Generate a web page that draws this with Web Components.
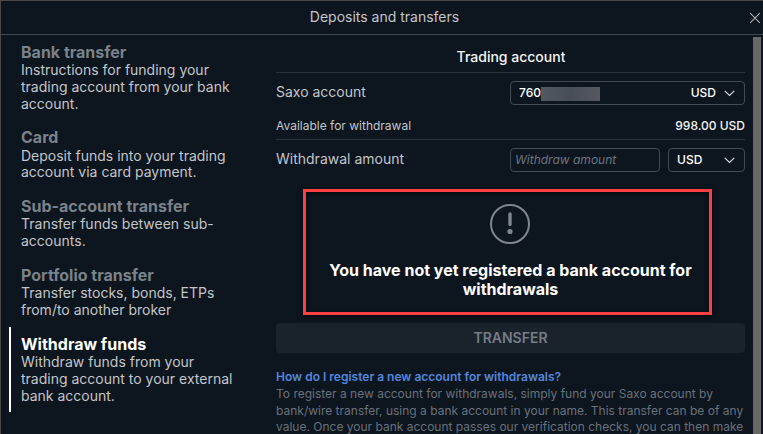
<!DOCTYPE html>
<html lang="en">
<head>
<meta charset="utf-8">
<title>Deposits and transfers</title>
<style>
  html, body {
    margin: 0;
    height: 100%;
    overflow: hidden;
    background: #0d151e;
  }
  body {
    font-family: Inter, 'Liberation Sans', sans-serif;
    font-size: 14px;
    line-height: 1.2;
    color: #c3c6ca;
  }
</style>
</head>
<body>
<transfer-dialog heading="Deposits and transfers">
  <menu-item slot="menu" label="Bank transfer">Instructions for funding your trading account from your bank account.</menu-item>
  <menu-item slot="menu" label="Card">Deposit funds into your trading account via card payment.</menu-item>
  <menu-item slot="menu" label="Sub-account transfer">Transfer funds between sub-accounts.</menu-item>
  <menu-item slot="menu" label="Portfolio transfer">Transfer stocks, bonds, ETPs from/to another broker</menu-item>
  <menu-item slot="menu" label="Withdraw funds" active>Withdraw funds from your trading account to your external bank account.</menu-item>
  <withdraw-form></withdraw-form>
</transfer-dialog>

<script>
class TransferDialog extends HTMLElement {
  constructor() {
    super();
    this.attachShadow({ mode: 'open' });
  }

  connectedCallback() {
    this.shadowRoot.innerHTML = `
      <style>
        :host {
          display: flex;
          flex-direction: column;
          box-sizing: border-box;
          height: 434px;
          border-top: 1px solid #474747;
          border-left: 1px solid #474747;
          overflow: hidden;
        }
        header {
          display: flex;
          align-items: center;
          flex: none;
          height: 33px;
          padding: 0 2px 0 10px;
          border-bottom: 1px solid #41474f;
        }
        h1 {
          flex: 1;
          margin: 0;
          padding-left: 9px;
          font-size: 14px;
          font-weight: 400;
          text-align: center;
        }
        .body {
          display: flex;
          flex: 1;
          min-height: 0;
        }
        nav {
          flex: none;
          width: 243px;
          margin-top: -.2px;
          padding-left: 8px;
        }
        main {
          flex: none;
          width: 469px;
          margin-left: 24px;
        }
        .scrollbar {
          flex: none;
          width: 8px;
          margin: 2px 0 0 8px;
          background: #686868;
        }
      </style>
      <header>
        <h1>${this.getAttribute('heading')}</h1>
        <svg width="12" height="12" viewBox="0 0 12 12" fill="none" stroke="#b0b2b5" stroke-width="1.1">
          <path d="M1.2 1.2l9.6 9.6M10.8 1.2l-9.6 9.6"/>
        </svg>
      </header>
      <div class="body">
        <nav><slot name="menu"></slot></nav>
        <main><slot></slot></main>
        <div class="scrollbar"></div>
      </div>
    `;
  }
}

class MenuItem extends HTMLElement {
  constructor() {
    super();
    this.attachShadow({ mode: 'open' });
  }

  connectedCallback() {
    this.shadowRoot.innerHTML = `
      <style>
        :host {
          display: block;
          width: 215px;
          padding: 8px 0 8px 10px;
          border-left: 2px solid transparent;
        }
        h2 {
          margin: 0;
          font-size: 16px;
          font-weight: 700;
          line-height: 19.2px;
          color: #7a828b;
        }
        p {
          margin: 0;
          line-height: 16.8px;
        }
        :host([active]) {
          border-color: #fff;
        }
        :host([active]) h2 {
          color: #fff;
        }
      </style>
      <h2>${this.getAttribute('label')}</h2>
      <p><slot></slot></p>
    `;
  }
}

class SelectBox extends HTMLElement {
  constructor() {
    super();
    this.attachShadow({ mode: 'open' });
  }

  connectedCallback() {
    this.shadowRoot.innerHTML = `
      <style>
        :host {
          display: flex;
          align-items: center;
          box-sizing: border-box;
          height: 24px;
          padding: 0 9px 0 8px;
          border: 1px solid #434a53;
          border-radius: 4px;
          font-size: 12px;
          font-weight: 500;
          color: #fff;
        }
        svg {
          margin-left: 8px;
        }
        .value {
          display: flex;
          align-items: center;
          flex: 1;
        }
      </style>
      <span class="value"><slot></slot></span>
      <span><slot name="currency"></slot></span>
      <svg width="11" height="7" viewBox="0 0 11 7" fill="none" stroke="#d5d7d9" stroke-width="1.3">
        <path d="M.7 .9l4.8 4.5L10.3 .9"/>
      </svg>
    `;
  }
}

class EmptyNotice extends HTMLElement {
  constructor() {
    super();
    this.attachShadow({ mode: 'open' });
  }

  connectedCallback() {
    this.shadowRoot.innerHTML = `
      <style>
        :host {
          display: flex;
          flex-direction: column;
          align-items: center;
          box-sizing: border-box;
          width: 409px;
          height: 126px;
          padding-top: 12px;
          border: 3px solid #ff4043;
          box-shadow: 0 2px 5px rgba(0, 0, 0, .5), inset 0 2px 5px rgba(0, 0, 0, .5);
        }
        svg {
          margin-left: 5px;
        }
        p {
          width: 380px;
          margin: 17px 0 0 6px;
          font-size: 16px;
          font-weight: 700;
          line-height: 19.2px;
          text-align: center;
          color: #fff;
        }
      </style>
      <svg width="40" height="40" viewBox="0 0 40 40" fill="none" stroke="#808691">
        <circle cx="20" cy="20" r="19" stroke-width="2"/>
        <path d="M20 10v10.5" stroke-width="3.4" stroke-linecap="round"/>
        <circle cx="20" cy="27.5" r="2.6" fill="#808691" stroke="none"/>
      </svg>
      <p><slot></slot></p>
    `;
  }
}

class WithdrawForm extends HTMLElement {
  constructor() {
    super();
    this.attachShadow({ mode: 'open' });
  }

  connectedCallback() {
    this.shadowRoot.innerHTML = `
      <style>
        :host {
          display: flex;
          flex-direction: column;
        }
        h2 {
          display: flex;
          align-items: center;
          justify-content: center;
          box-sizing: border-box;
          height: 38px;
          margin: 0;
          padding: 8px 0 0 1px;
          border-bottom: 1px solid #2b323b;
          font-size: 14px;
          font-weight: 500;
          color: #f4f5f5;
        }
        .row {
          display: flex;
          align-items: center;
          gap: 8px;
        }
        .row label {
          flex: 1;
        }
        .account label, .amount label {
          padding-bottom: 2px;
        }
        .account {
          height: 40px;
        }
        .account select-box {
          width: 235px;
        }
        .mask {
          width: 59px;
          height: 14px;
          margin-top: 1px;
          background: linear-gradient(90deg, #515960, #484e57 50%, #555861);
        }
        .available {
          height: 26px;
          border-bottom: 1px solid #2b323b;
          font-size: 12px;
        }
        .available span {
          font-weight: 500;
          color: #f4f5f5;
        }
        .amount {
          height: 40px;
        }
        .amount select-box {
          width: 77px;
        }
        input {
          box-sizing: border-box;
          width: 150px;
          height: 24px;
          padding: 0 4px 1px;
          border: 1px solid #434a53;
          border-radius: 4px;
          background: none;
          font: 12px Inter, 'Liberation Sans', sans-serif;
          outline: none;
        }
        input::placeholder {
          font-style: italic;
          color: #6d7682;
        }
        empty-notice {
          margin: 9px 0 8px 27px;
        }
        button {
          height: 30px;
          padding: 0 0 1px;
          border: 0;
          border-radius: 4px;
          background: #1a222b;
          font: 600 14px Inter, 'Liberation Sans', sans-serif;
          color: #757d86;
        }
        .help {
          margin-top: 16px;
          font-size: 12px;
          line-height: 16.8px;
          color: #69727c;
        }
        .help h3 {
          margin: 0;
          font-size: 12px;
          font-weight: 600;
          color: #5287dc;
        }
        .help p {
          margin: 0;
          white-space: nowrap;
        }
      </style>
      <h2>Trading account</h2>
      <div class="row account">
        <label>Saxo account</label>
        <select-box>760<span class="mask"></span><span slot="currency">USD</span></select-box>
      </div>
      <div class="row available">
        <label>Available for withdrawal</label>
        <span>998.00 USD</span>
      </div>
      <div class="row amount">
        <label>Withdrawal amount</label>
        <input type="text" placeholder="Withdraw amount">
        <select-box>USD</select-box>
      </div>
      <empty-notice>You have not yet registered a bank account for withdrawals</empty-notice>
      <button type="button" disabled>TRANSFER</button>
      <div class="help">
        <h3>How do I register a new account for withdrawals?</h3>
        <p>To register a new account for withdrawals, simply fund your Saxo account by<br>bank/wire transfer, using a bank account in your name. This transfer can be of any<br>value. Once your bank account passes our verification checks, you can then make</p>
      </div>
    `;
  }
}

customElements.define('transfer-dialog', TransferDialog);
customElements.define('menu-item', MenuItem);
customElements.define('select-box', SelectBox);
customElements.define('empty-notice', EmptyNotice);
customElements.define('withdraw-form', WithdrawForm);
</script>
</body>
</html>
